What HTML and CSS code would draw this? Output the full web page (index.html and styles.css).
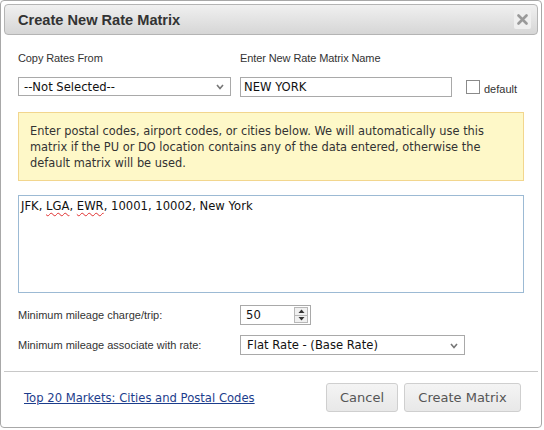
FILE: index.html
```html
<!DOCTYPE html>
<html>
<head>
<meta charset="utf-8">
<link rel="stylesheet" href="styles.css">
</head>
<body>
<div class="dialog">
  <div class="titlebar">
    <span class="title">Create New Rate Matrix</span>
    <span class="close"><svg width="11" height="11" viewBox="0 0 11 11"><path d="M1.5 1.5 L9.5 9.5 M9.5 1.5 L1.5 9.5" stroke="#9a9a9a" stroke-width="2.6" stroke-linecap="round"/></svg></span>
  </div>
  <div class="content">
    <div class="labels">
      <div class="lab1">Copy Rates From</div>
      <div class="lab2">Enter New Rate Matrix Name</div>
    </div>
    <div class="fields">
      <div class="select sel1"><span>--Not Selected--</span><svg class="chev" width="8" height="6" viewBox="0 0 8 6"><path d="M1 1 L4 4.5 L7 1" fill="none" stroke="#777" stroke-width="1.6"/></svg></div>
      <div class="input name">NEW YORK</div>
      <div class="chk"><span class="box"></span><span class="chklabel">default</span></div>
    </div>
    <div class="note">Enter postal codes, airport codes, or cities below. We will automatically use this matrix if the PU or DO location contains any of the data entered, otherwise the default matrix will be used.</div>
    <div class="area">JFK, <span class="sp">LGA</span>, <span class="sp">EWR</span>, 10001, 10002, New York</div>
    <div class="frow first">
      <div class="flabel">Minimum mileage charge/trip:</div>
      <div class="input num"><span>50</span><span class="spin"><span class="up"><svg width="7" height="4" viewBox="0 0 7 4"><path d="M0.5 4 L3.5 0.5 L6.5 4 Z" fill="#333"/></svg></span><span class="down"><svg width="7" height="4" viewBox="0 0 7 4"><path d="M0.5 0 L3.5 3.5 L6.5 0 Z" fill="#333"/></svg></span></span></div>
    </div>
    <div class="frow">
      <div class="flabel">Minimum mileage associate with rate:</div>
      <div class="select sel2"><span>Flat Rate - (Base Rate)</span><svg class="chev" width="8" height="6" viewBox="0 0 8 6"><path d="M1 1 L4 4.5 L7 1" fill="none" stroke="#777" stroke-width="1.6"/></svg></div>
    </div>
  </div>
  <div class="footer">
    <a class="link" href="#">Top 20 Markets: Cities and Postal Codes</a>
    <div class="btns">
      <button class="btn cancel">Cancel</button>
      <button class="btn create">Create Matrix</button>
    </div>
  </div>
</div>
</body>
</html>
```

FILE: styles.css
```css
html, body {
  margin: 0;
  padding: 0;
  background: #ffffff;
}
body {
  font-family: "DejaVu Sans", Verdana, sans-serif;
  color: #222;
}
.dialog {
  width: 540px;
  height: 426px;
  border: 1px solid #a8a8a8;
  border-radius: 4px;
  background: #fff;
  display: flex;
  flex-direction: column;
}
.titlebar {
  margin: 3px 3px 0 3px;
  height: 29px;
  border: 1px solid #b4b4b4;
  border-radius: 4px;
  background: linear-gradient(#f0f0f0, #d6d6d6);
  display: flex;
  align-items: center;
  justify-content: space-between;
  padding-left: 13px;
}
.title {
  font-family: "Liberation Sans", Arial, sans-serif;
  font-weight: bold;
  font-size: 14.6px;
  color: #333;
  padding-top: 1px;
}
.close {
  width: 17px;
  height: 19px;
  margin-right: 6px;
  background: #efefef;
  border-radius: 2px;
  display: flex;
  align-items: center;
  justify-content: center;
}
.content {
  padding: 0 17px;
}
.labels {
  display: flex;
  margin-top: 16px;
  font-family: "Liberation Sans", Arial, sans-serif;
  font-size: 11px;
  letter-spacing: -0.1px;
  line-height: 14px;
  color: #333;
}
.lab1 { width: 222px; }
.fields {
  display: flex;
  align-items: center;
  margin-top: 12px;
  height: 19px;
}
.select, .input {
  box-sizing: border-box;
  border: 1px solid #a9a9a9;
  background: #fff;
  font-size: 11.6px;
  color: #111;
  display: flex;
  align-items: center;
}
.select {
  justify-content: space-between;
  padding: 0 6px 0 5px;
}
.sel1 {
  width: 213px;
  height: 19px;
}
.chev { margin-top: 1px; }
.name {
  width: 212px;
  height: 20px;
  margin-left: 9px;
  padding-left: 3px;
}
.chk {
  display: flex;
  align-items: center;
  margin-left: 14px;
  margin-top: 3px;
}
.box {
  width: 12px;
  height: 12px;
  border: 1px solid #8a8a8a;
  background: #fff;
  margin-top: -3px;
}
.chklabel {
  font-family: "Liberation Sans", Arial, sans-serif;
  font-size: 11px;
  margin-left: 4px;
  margin-top: 2px;
  color: #333;
}
.note {
  margin-top: 16px;
  border: 1px solid #f2d68e;
  background: #fef8c8;
  padding: 10px 11px 9px 11px;
  font-size: 11.4px;
  line-height: 16px;
  color: #333;
}
.area {
  margin-top: 14px;
  box-sizing: border-box;
  height: 98px;
  border: 1px solid #9cbad4;
  padding: 2px 2px;
  font-size: 11.6px;
  line-height: 16px;
  color: #111;
}
.sp {
  text-decoration: underline wavy #e03030;
  text-decoration-thickness: 1px;
  text-underline-offset: 2px;
}
.frow {
  display: flex;
  align-items: center;
  margin-top: 10px;
}
.frow.first { margin-top: 12px; }
.flabel {
  width: 222px;
  font-family: "Liberation Sans", Arial, sans-serif;
  font-size: 11px;
  color: #333;
}
.num {
  width: 71px;
  height: 20px;
  padding-left: 5px;
  justify-content: space-between;
  padding-right: 2px;
}
.spin {
  display: flex;
  flex-direction: column;
  width: 14px;
  height: 16px;
  border: 1px solid #b8b8b8;
  background: #f0f0f0;
  box-sizing: border-box;
}
.spin .up, .spin .down {
  flex: 1;
  display: flex;
  align-items: center;
  justify-content: center;
}
.spin .up { border-bottom: 1px solid #b8b8b8; }
.sel2 {
  width: 225px;
  height: 20px;
  padding-left: 6px;
}
.footer {
  margin: 16px 3px 0 3px;
  border-top: 1px solid #c8c8c8;
  padding: 11px 17px 0 20px;
  display: flex;
  justify-content: space-between;
  align-items: center;
}
.link {
  font-size: 11.6px;
  color: #1c3d8c;
  text-decoration: underline;
}
.btns {
  display: flex;
  gap: 6px;
}
.btn {
  font-family: "DejaVu Sans", Verdana, sans-serif;
  font-size: 13px;
  color: #555;
  height: 29px;
  border: 1px solid #cfcfcf;
  border-radius: 3px;
  background: linear-gradient(#f4f4f4, #e8e8e8);
  padding: 0;
}
.cancel { width: 72px; }
.create { width: 117px; }
```
